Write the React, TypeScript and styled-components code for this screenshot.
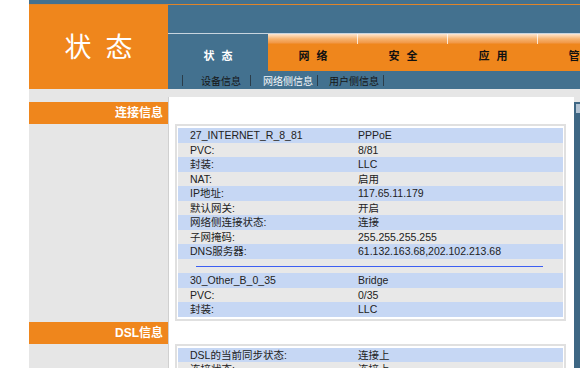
import React from 'react'
import styled, { createGlobalStyle } from 'styled-components'

const orange = '#ef861c'
const navBlue = '#43718f'

const GlobalStyle = createGlobalStyle`
  html, body {
    margin: 0;
    padding: 0;
    overflow: hidden;
    background: #fff;
  }
  body {
    font-family: 'Liberation Sans', 'Noto Sans CJK SC', sans-serif;
  }
`

const Page = styled.div`
  width: 580px;
  padding-left: 29px;
  box-sizing: border-box;
`

const TopStrip = styled.div`
  height: 4px;
  background: ${navBlue};
  border-bottom: 1px solid #e08428;
`

const Header = styled.div`
  display: flex;
  height: 84px;
`

const Brand = styled.div`
  width: 139px;
  flex: 0 0 139px;
  background: ${orange};
  display: flex;
  align-items: center;
  justify-content: center;
  padding-bottom: 3px;
  box-sizing: border-box;
  color: #fff;
  font-family: 'Noto Sans CJK SC', sans-serif;
  font-size: 27px;
  word-spacing: 8px;
`

const NavArea = styled.div`
  flex: 1;
  min-width: 0;
  background: ${navBlue};
  display: flex;
  flex-direction: column;
  overflow: hidden;
`

const NavTop = styled.div`
  height: 28px;
  border-bottom: 1px solid #c8d5df;
`

const Tabs = styled.div`
  display: flex;
  height: 37px;
`

const Tab = styled.div<{ $active?: boolean; $width: number }>`
  position: relative;
  flex: 0 0 ${({ $width }) => $width}px;
  display: flex;
  align-items: center;
  justify-content: center;
  padding-top: 4px;
  box-sizing: border-box;
  font-family: 'Noto Sans CJK SC', sans-serif;
  font-size: 11px;
  font-weight: 700;
  word-spacing: 4.5px;
  color: ${({ $active }) => ($active ? '#fff' : '#111')};
  background: ${({ $active }) =>
    $active
      ? navBlue
      : `linear-gradient(#fde6cf 0, #f6b26e 5px, #f19745 9px, ${orange} 10px)`};

  &::after {
    content: '';
    position: absolute;
    right: 0;
    top: 0;
    width: 1px;
    height: 10px;
    background: rgba(255, 255, 255, 0.75);
    display: ${({ $active }) => ($active ? 'none' : 'block')};
  }
`

const SubNav = styled.div`
  height: 18px;
  display: flex;
  align-items: center;
  padding-left: 14px;
  font-family: 'Noto Sans CJK SC', sans-serif;
  font-size: 10px;
`

const Sep = styled.span`
  width: 1px;
  height: 11px;
  background: #2b3d4a;
`

const SubLink = styled.span<{ $active?: boolean; $before: number; $after: number }>`
  margin: 0 ${({ $after }) => $after}px 0 ${({ $before }) => $before}px;
  color: ${({ $active }) => ($active ? '#f4f7fa' : '#161616')};
  white-space: nowrap;
`

const Body = styled.div`
  display: flex;
  background: #e6e6e6;
  padding-top: 8px;
`

const Sections = styled.div`
  flex: 1;
`

const RightStrip = styled.div`
  position: relative;
  flex: 0 0 6px;
  margin-top: 5px;
  background: #3e6784;

  &::before {
    content: '';
    position: absolute;
    top: 2px;
    left: 2px;
    right: 0;
    height: 9px;
    background: #b4c4d3;
  }
`

const Section = styled.div`
  display: grid;
  grid-template-columns: 139px 1fr;
`

const SideCell = styled.div<{ $offset: number }>`
  padding-top: ${({ $offset }) => $offset}px;
`

const SideTitle = styled.div`
  height: 22px;
  line-height: 22px;
  background: ${orange};
  color: #fff;
  text-align: right;
  padding-right: 5px;
  font-family: 'Liberation Sans', 'Noto Sans CJK SC', sans-serif;
  font-size: 12px;
  font-weight: 700;
`

const MainCell = styled.div<{ $offset: number }>`
  background: #fff;
  border-left: 1px solid #d0d0d0;
  padding: ${({ $offset }) => $offset + 22}px 8px 0 6px;
`

const InfoBox = styled.div`
  border: 2px solid #e0e0e0;
  padding: 2px 1px;
`

const Row = styled.div<{ $tone: 'blue' | 'gray' }>`
  display: grid;
  grid-template-columns: 180px 1fr;
  height: 14.5px;
  line-height: 14.5px;
  font-size: 10.5px;
  color: #222;
  background: ${({ $tone }) => ($tone === 'blue' ? '#c6d7f4' : '#e8e8e8')};
  white-space: nowrap;
`

const Label = styled.span`
  padding-left: 12px;
`

const DividerRow = styled.div`
  height: 14.5px;
  box-sizing: border-box;
  padding: 7px 20px 0 18px;
  background: #e8e8e8;
`

const Line = styled.div`
  height: 1px;
  background: #3d5ff2;
`

type Pair = [string, string]

const wanRows: Pair[] = [
  ['27_INTERNET_R_8_81', 'PPPoE'],
  ['PVC:', '8/81'],
  ['封装:', 'LLC'],
  ['NAT:', '启用'],
  ['IP地址:', '117.65.11.179'],
  ['默认网关:', '开启'],
  ['网络侧连接状态:', '连接'],
  ['子网掩码:', '255.255.255.255'],
  ['DNS服务器:', '61.132.163.68,202.102.213.68'],
]

const bridgeRows: Pair[] = [
  ['30_Other_B_0_35', 'Bridge'],
  ['PVC:', '0/35'],
  ['封装:', 'LLC'],
]

const dslRows: Pair[] = [
  ['DSL的当前同步状态:', '连接上'],
  ['连接状态:', '连接上'],
  ['上行速率:', '512 kbps'],
  ['下行速率:', '4096 kbps'],
]

const tabs = [
  { label: '状 态', width: 100, active: true },
  { label: '网 络', width: 90 },
  { label: '安 全', width: 90 },
  { label: '应 用', width: 90 },
  { label: '管 理', width: 90 },
]

const renderRows = (rows: Pair[]) =>
  rows.map(([label, value], idx) => (
    <Row key={label + idx} $tone={idx % 2 === 0 ? 'blue' : 'gray'}>
      <Label>{label}</Label>
      <span>{value}</span>
    </Row>
  ))

const App: React.FC = () => {
  return (
    <>
      <GlobalStyle />
      <Page>
        <TopStrip />
        <Header>
          <Brand>状 态</Brand>
          <NavArea>
            <NavTop />
            <Tabs>
              {tabs.map((t) => (
                <Tab key={t.label} $width={t.width} $active={t.active}>
                  {t.label}
                </Tab>
              ))}
            </Tabs>
            <SubNav>
              <Sep />
              <SubLink $before={18} $after={9}>
                设备信息
              </SubLink>
              <Sep />
              <SubLink $active $before={12} $after={4}>
                网络侧信息
              </SubLink>
              <Sep />
              <SubLink $before={11} $after={4}>
                用户侧信息
              </SubLink>
              <Sep />
            </SubNav>
          </NavArea>
        </Header>

        <Body>
          <Sections>
            {/* connection info */}
            <Section>
              <SideCell $offset={5}>
                <SideTitle>连接信息</SideTitle>
              </SideCell>
              <MainCell $offset={5}>
                <InfoBox>
                  {renderRows(wanRows)}
                  <DividerRow>
                    <Line />
                  </DividerRow>
                  {renderRows(bridgeRows)}
                </InfoBox>
              </MainCell>
            </Section>

            {/* DSL info */}
            <Section>
              <SideCell $offset={1}>
                <SideTitle>DSL信息</SideTitle>
              </SideCell>
              <MainCell $offset={1}>
                <InfoBox>{renderRows(dslRows)}</InfoBox>
              </MainCell>
            </Section>
          </Sections>
          <RightStrip />
        </Body>
      </Page>
    </>
  )
}

export default App
